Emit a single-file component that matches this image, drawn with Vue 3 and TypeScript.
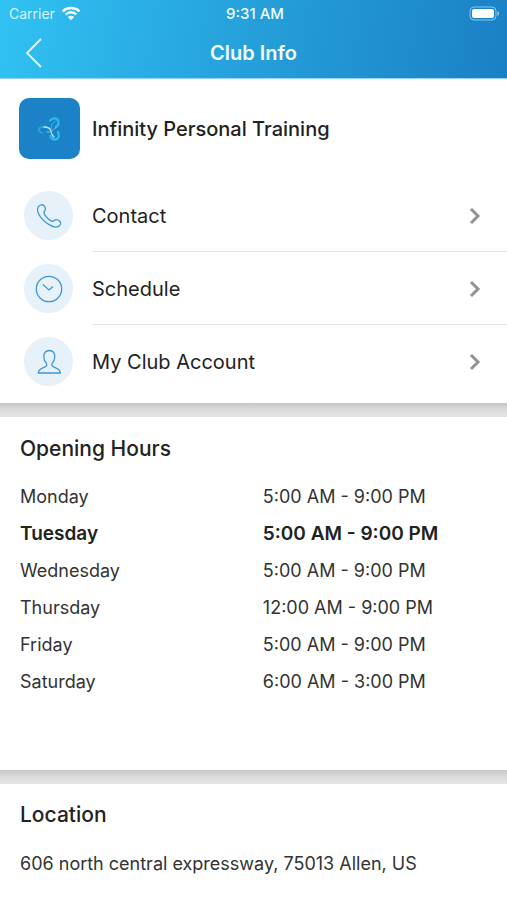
<script setup lang="ts">
interface MenuItem {
  label: string
  icon: 'phone' | 'clock' | 'person'
}

interface OpeningHours {
  day: string
  hours: string
  today?: boolean
}

const menu: MenuItem[] = [
  { label: 'Contact', icon: 'phone' },
  { label: 'Schedule', icon: 'clock' },
  { label: 'My Club Account', icon: 'person' },
]

const openingHours: OpeningHours[] = [
  { day: 'Monday', hours: '5:00 AM - 9:00 PM' },
  { day: 'Tuesday', hours: '5:00 AM - 9:00 PM', today: true },
  { day: 'Wednesday', hours: '5:00 AM - 9:00 PM' },
  { day: 'Thursday', hours: '12:00 AM - 9:00 PM' },
  { day: 'Friday', hours: '5:00 AM - 9:00 PM' },
  { day: 'Saturday', hours: '6:00 AM - 3:00 PM' },
]
</script>

<template>
  <div class="screen">
    <header class="header">
      <div class="status">
        <div class="carrier">
          <span>Carrier</span>
          <svg class="wifi" viewBox="0 0 20 15" aria-hidden="true">
            <path d="M1.6 5.4a12 12 0 0 1 16.8 0" />
            <path d="M4.6 8.5a7.7 7.7 0 0 1 10.8 0" />
            <path class="dot" d="M6.9 11.1a4.4 4.4 0 0 1 6.2 0L10 14.3z" />
          </svg>
        </div>
        <span class="time">9:31 AM</span>
        <svg class="battery" viewBox="0 0 32 15" aria-hidden="true">
          <rect class="shell" x="1" y="1" width="26" height="13" rx="4" />
          <rect class="charge" x="3" y="3" width="22" height="9" rx="2" />
          <path class="tip" d="M28.5 5c2.2.8 2.2 4.2 0 5z" />
        </svg>
      </div>
      <div class="nav">
        <button class="back" type="button" aria-label="Back">
          <svg viewBox="0 0 18 30" aria-hidden="true"><path d="M16 1 2 15l14 14" /></svg>
        </button>
        <h1 class="title">Club Info</h1>
      </div>
    </header>

    <main>
      <section class="card">
        <div class="club">
          <svg class="logo" viewBox="0 0 61 61" aria-hidden="true">
            <rect width="61" height="61" rx="10" fill="#1b82c8" />
            <g fill="none" stroke-linecap="round">
              <path d="M31 22.500C34 19 39.500 20 39.500 24.500c0 2-1 3.500-2.500 4.500" stroke="#27b7ec" stroke-width="2.400" />
              <path d="M39 34c2 4 0 8-3.500 7.500-2-.3-3.300-1.700-4-3.500" stroke="#2cb9ee" stroke-width="2.400" />
              <path d="M23.500 35c-4-1-5-3.500-2.500-5.200 1.500-1 3.500-1 5.500-.6" stroke="#2ba7e0" stroke-width="1.800" />
              <path d="M36 23.500c-3 1.500-4 4-3.500 7" stroke="#4fb5e4" stroke-width="1" />
              <path d="M25 29c4 0 6.500 1 7 4.500.2 2 1 4 3 5.500" stroke="#b9e3f5" stroke-width="1.300" />
              <path d="M28 34c4 0 7-1.500 9-5" stroke="#6fc4ea" stroke-width="1" />
            </g>
          </svg>
          <h2 class="club-name">Infinity Personal Training</h2>
        </div>

        <nav class="menu">
          <a v-for="item in menu" :key="item.label" class="menu-item" href="#">
            <span class="badge">
              <svg v-if="item.icon === 'phone'" viewBox="0 0 28 28" aria-hidden="true">
                <path d="M3.500 4.700C5 2.700 7.500 2 9 3.700c1.600 2 2 3.600.6 5.300-1.200 1.500-.9 2.500.3 4.100 1.600 2.200 3.500 4 5.700 5.500 1.500 1 2.400 1 3.700-.1 1.800-1.400 3.700-1 5.500.7 1.600 1.600.9 4-1.200 5.200-2.600 1.500-6.200.2-9.500-1.800C9.600 19.900 5.700 16 3.700 12 2.300 9.200 2 6.800 3.500 4.700z" />
              </svg>
              <svg v-else-if="item.icon === 'clock'" viewBox="0 0 28 28" aria-hidden="true">
                <circle cx="14" cy="14" r="12.700" />
                <path d="m8 9.500 6 5.500 4-3.500" />
              </svg>
              <svg v-else viewBox="0 0 28 28" aria-hidden="true">
                <path d="M14.300 2.500c-3.600 0-5.700 2.700-5.500 6.200.1 3 1 5 2.600 6.600.8 1.400.3 2.800-1.200 3.500C6.900 20.300 3.500 20.600 3.300 25h22c-.2-4.400-3.600-4.700-6.900-6.200-1.500-.7-2-2.100-1.200-3.500 1.600-1.600 2.500-3.600 2.600-6.600.2-3.500-1.900-6.200-5.500-6.200z" />
              </svg>
            </span>
            <span class="menu-body">
              <span>{{ item.label }}</span>
              <svg class="chevron" viewBox="0 0 12 18" aria-hidden="true"><path d="m2 2 7 7-7 7" /></svg>
            </span>
          </a>
        </nav>
      </section>

      <div class="divider"></div>

      <section class="card hours">
        <h2 class="heading">Opening Hours</h2>
        <table class="table">
          <tbody>
            <tr v-for="row in openingHours" :key="row.day" :class="{ today: row.today }">
              <th scope="row">{{ row.day }}</th>
              <td>{{ row.hours }}</td>
            </tr>
          </tbody>
        </table>
      </section>

      <div class="divider"></div>

      <section class="card location">
        <h2 class="heading">Location</h2>
        <address class="address">606 north central expressway, 75013 Allen, US</address>
      </section>
    </main>
  </div>
</template>

<style>
body {
  margin: 0;
  background: #fff;
}
</style>

<style scoped>
.screen {
  min-height: 100vh;
  background: #fff;
  color: #222;
  font-family: Inter, "Liberation Sans", sans-serif;
}

h1,
h2 {
  margin: 0;
  font-weight: 500;
}

.header {
  background: linear-gradient(100deg, #31c2f3 0%, #259fda 50%, #1a80c5 100%);
  border-bottom: 1px solid #8fd4f3;
  color: #fff;
}

.status {
  display: grid;
  grid-template-columns: 1fr auto 1fr;
  align-items: center;
  height: 27px;
  padding: 0 6px 0 9px;
}

.carrier {
  display: flex;
  align-items: center;
  gap: 6px;
  color: #d8f4ff;
  font-size: 14px;
}

.wifi {
  width: 20px;
  height: 15px;
  fill: none;
  stroke: #fff;
  stroke-width: 2.4;
}

.wifi .dot {
  fill: #fff;
  stroke: none;
}

.time {
  font-size: 15px;
  font-weight: 500;
  color: #ecfaff;
}

.battery {
  width: 32px;
  height: 15px;
  justify-self: end;
}

.shell {
  fill: none;
  stroke: #8fc6ea;
  stroke-width: 1;
}

.charge {
  fill: #fff;
}

.tip {
  fill: #8fc6ea;
}

.nav {
  display: grid;
  grid-template-columns: 68px 1fr 68px;
  align-items: center;
  height: 51px;
}

.back {
  display: flex;
  justify-content: center;
  padding: 0;
  border: 0;
  background: none;
  cursor: pointer;
}

.back svg {
  width: 18px;
  height: 30px;
  fill: none;
  stroke: #e2f7ff;
  stroke-width: 1.8;
}

.title {
  text-align: center;
  font-size: 20px;
  font-weight: 600;
  color: #f2fcff;
}

.divider {
  height: 14px;
  background: linear-gradient(#c6c6c6, #dadada 45%, #e4e4e4);
}

.club {
  display: flex;
  align-items: center;
  gap: 12px;
  padding: 19px 20px 20px 19px;
}

.logo {
  width: 61px;
  height: 61px;
}

.club-name {
  font-size: 20px;
}

.menu {
  padding-bottom: 5px;
}

.menu-item {
  display: flex;
  align-items: center;
  padding-left: 24px;
  gap: 19px;
  color: inherit;
  font-size: 20px;
  text-decoration: none;
}

.badge {
  display: flex;
  align-items: center;
  justify-content: center;
  width: 49px;
  height: 49px;
  border-radius: 50%;
  background: #e6f1fa;
}

.badge svg {
  width: 28px;
  height: 28px;
  fill: none;
  stroke: #3d98d6;
  stroke-width: 1.3;
}

.menu-body {
  flex: 1;
  display: flex;
  align-items: center;
  justify-content: space-between;
  height: 70px;
  padding: 2px 26px 0 0;
  border-bottom: 1px solid #e4e4e4;
}

.menu-item:last-child .menu-body {
  border-bottom-color: transparent;
}

.chevron {
  width: 12px;
  height: 18px;
  fill: none;
  stroke: #929292;
  stroke-width: 3;
}

.hours {
  padding: 17px 20px 70px;
}

.location {
  padding: 16px 20px;
}

.heading {
  font-size: 21px;
  line-height: 30px;
}

.table {
  width: 100%;
  margin-top: 14px;
  border-collapse: collapse;
  table-layout: fixed;
  color: #333;
  font-size: 18px;
  line-height: 37px;
}

.table th,
.table td {
  padding: 0;
  font-weight: 400;
  text-align: left;
}

.table th {
  width: 52%;
}

.table .today th,
.table .today td {
  font-size: 19px;
  font-weight: 600;
  color: #222;
}

.address {
  margin-top: 16px;
  color: #333;
  font-size: 18px;
  font-style: normal;
  line-height: 36px;
}
</style>
